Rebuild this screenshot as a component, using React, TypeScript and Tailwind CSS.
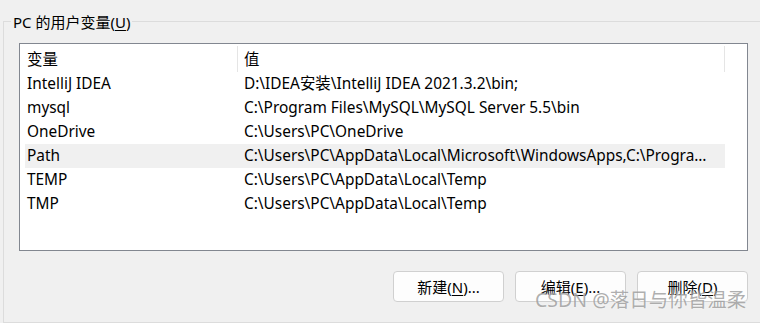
import React from "react";

const rows: [string, string][] = [
  ["IntelliJ IDEA", "D:\\IDEA安装\\IntelliJ IDEA 2021.3.2\\bin;"],
  ["mysql", "C:\\Program Files\\MySQL\\MySQL Server 5.5\\bin"],
  ["OneDrive", "C:\\Users\\PC\\OneDrive"],
  ["Path", "C:\\Users\\PC\\AppData\\Local\\Microsoft\\WindowsApps,C:\\Program Files\\Java\\bin"],
  ["TEMP", "C:\\Users\\PC\\AppData\\Local\\Temp"],
  ["TMP", "C:\\Users\\PC\\AppData\\Local\\Temp"],
];

function Btn({ pre, k, post }: { pre: string; k: string; post: string }) {
  return (
    <button className="w-[111px] h-[31px] rounded-[4px] border border-[#d0d0d0] bg-[#fdfdfd] text-[15px] text-black flex items-center justify-center leading-none pt-[1px]">
      <span>
        {pre}(<span className="underline underline-offset-2">{k}</span>){post}
      </span>
    </button>
  );
}

export default function App() {
  return (
    <div
      className="relative w-[760px] h-[323px] overflow-hidden bg-[#f0f0f0] text-[#000]"
      style={{ fontFamily: '"Noto Sans", "Noto Sans CJK SC", sans-serif' }}
    >
      <div className="ml-[3px] mt-[21px] w-[780px] h-[302px] border border-[#dcdcdc] flex flex-col">
        <div className="-mt-[11px] ml-[7px] self-start px-[2px] h-[22px] bg-[#f0f0f0] text-[15px] leading-[22px]">
          PC 的用户变量(<span className="underline underline-offset-2">U</span>)
        </div>
        <div className="ml-[15px] mt-[10px] w-[729px] h-[208px] border border-[#828790] bg-white flex flex-col text-[15.4px]">
          <div className="h-[28px] flex shrink-0">
            <div className="w-[217px] pl-[7px] pt-[5px] leading-[22px]">变量</div>
            <div className="w-px mt-[2px] bg-[#e5e5e5]" />
            <div className="w-[486px] pl-[6px] pt-[5px] leading-[22px]">值</div>
            <div className="w-px mt-[2px] bg-[#e5e5e5]" />
          </div>
          {rows.map(([n, v], i) => (
            <div
              key={n}
              className={`ml-[5px] w-[700px] h-[24px] flex items-center leading-[24px] ${i === 3 ? "bg-[#f0f0f0]" : ""}`}
            >
              <div className="w-[219px] pl-[2px] shrink-0 whitespace-nowrap">{n}</div>
              <div className="flex-1 min-w-0 pr-[8px] whitespace-nowrap overflow-hidden text-ellipsis">{v}</div>
            </div>
          ))}
        </div>
        <div className="ml-[15px] mt-[20px] w-[729px] flex justify-end gap-[11px]">
          <Btn pre="新建" k="N" post="..." />
          <Btn pre="编辑" k="E" post="..." />
          <Btn pre="删除" k="D" post="" />
        </div>
      </div>
      <div
        className="absolute left-[535px] top-[287px] text-[19.5px] leading-[26px] text-[#8c8c8c]/70 whitespace-nowrap"
        style={{ textShadow: "0 0 2px rgba(255,255,255,0.6)" }}
      >
        CSDN @落日与你皆温柔
      </div>
    </div>
  );
}
